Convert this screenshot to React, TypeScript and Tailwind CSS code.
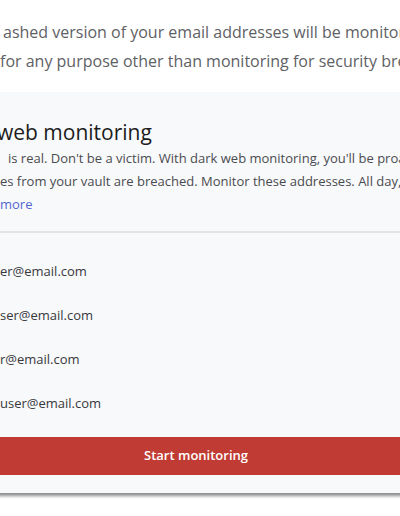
import React from "react";

// a line whose beginning is cut off by the left edge of the screenshot
const CutLine = ({
  hidden,
  shown,
  className = "",
  shownClassName = "",
}: {
  hidden: string;
  shown: string;
  className?: string;
  shownClassName?: string;
}) => (
  <div className={`flex whitespace-nowrap ${className}`}>
    <span className="flex w-0 justify-end">
      <span>{hidden}</span>
    </span>
    <span className={shownClassName}>{shown}</span>
  </div>
);

const emails = [
  { hidden: "us", shown: "er@email.com" },
  { hidden: "nextu", shown: "ser@email.com" },
  { hidden: "anotheruse", shown: "r@email.com" },
  { hidden: "last", shown: "user@email.com" },
];

export default function App() {
  return (
    <div className="w-[400px] h-[516px] overflow-hidden bg-white font-['Open_Sans',sans-serif]">
      <div className="pt-[18px] text-[16px] leading-[29px] text-[#606165]">
        <CutLine
          hidden="Only a h"
          shown="ashed version of your email addresses will be monitored and it will not be used"
          shownClassName="ml-[3px]"
        />
        <CutLine
          hidden="and will not be used "
          shown="for any purpose other than monitoring for security breaches."
        />
      </div>

      <div className="mt-4 ml-[-32px] w-[456px] bg-[#f8f9fb] px-[20px] pt-[25px] pb-[18px] shadow-[0_4px_3px_-1px_rgba(0,0,0,0.45)]">
        <div className="pl-[12px]">
          <CutLine
            hidden="Dark "
            shown="web monitoring"
            className="text-[21px] leading-[30px] font-medium text-[#1c1c1c]"
            shownClassName="ml-[-3px]"
          />
          <div className="text-[13px] leading-[23px] text-[#4a4b4f]">
            <CutLine
              hidden="The threat "
              shown="is real. Don't be a victim. With dark web monitoring, you'll be proactively alerted"
              shownClassName="ml-[8px]"
            />
            <CutLine
              hidden="when email address"
              shown="es from your vault are breached. Monitor these addresses. All day, every day."
            />
            <CutLine hidden="Learn " shown="more" className="text-[#5468cf]" />
          </div>
        </div>

        <div className="mt-[15px] h-[2px] bg-[#e1e3e7]" />

        <div className="pl-[12px] pt-[17px]">
          {emails.map((e) => (
            <div key={e.shown} className="flex h-[44px] items-center">
              <CutLine
                hidden={e.hidden}
                shown={e.shown}
                className="text-[13px] text-[#37383c]"
              />
            </div>
          ))}
        </div>

        <button className="mt-[11px] flex h-[38px] w-full items-center justify-center bg-[#c03b33] text-[13px] font-semibold text-white">
          Start monitoring
        </button>
      </div>
    </div>
  );
}
